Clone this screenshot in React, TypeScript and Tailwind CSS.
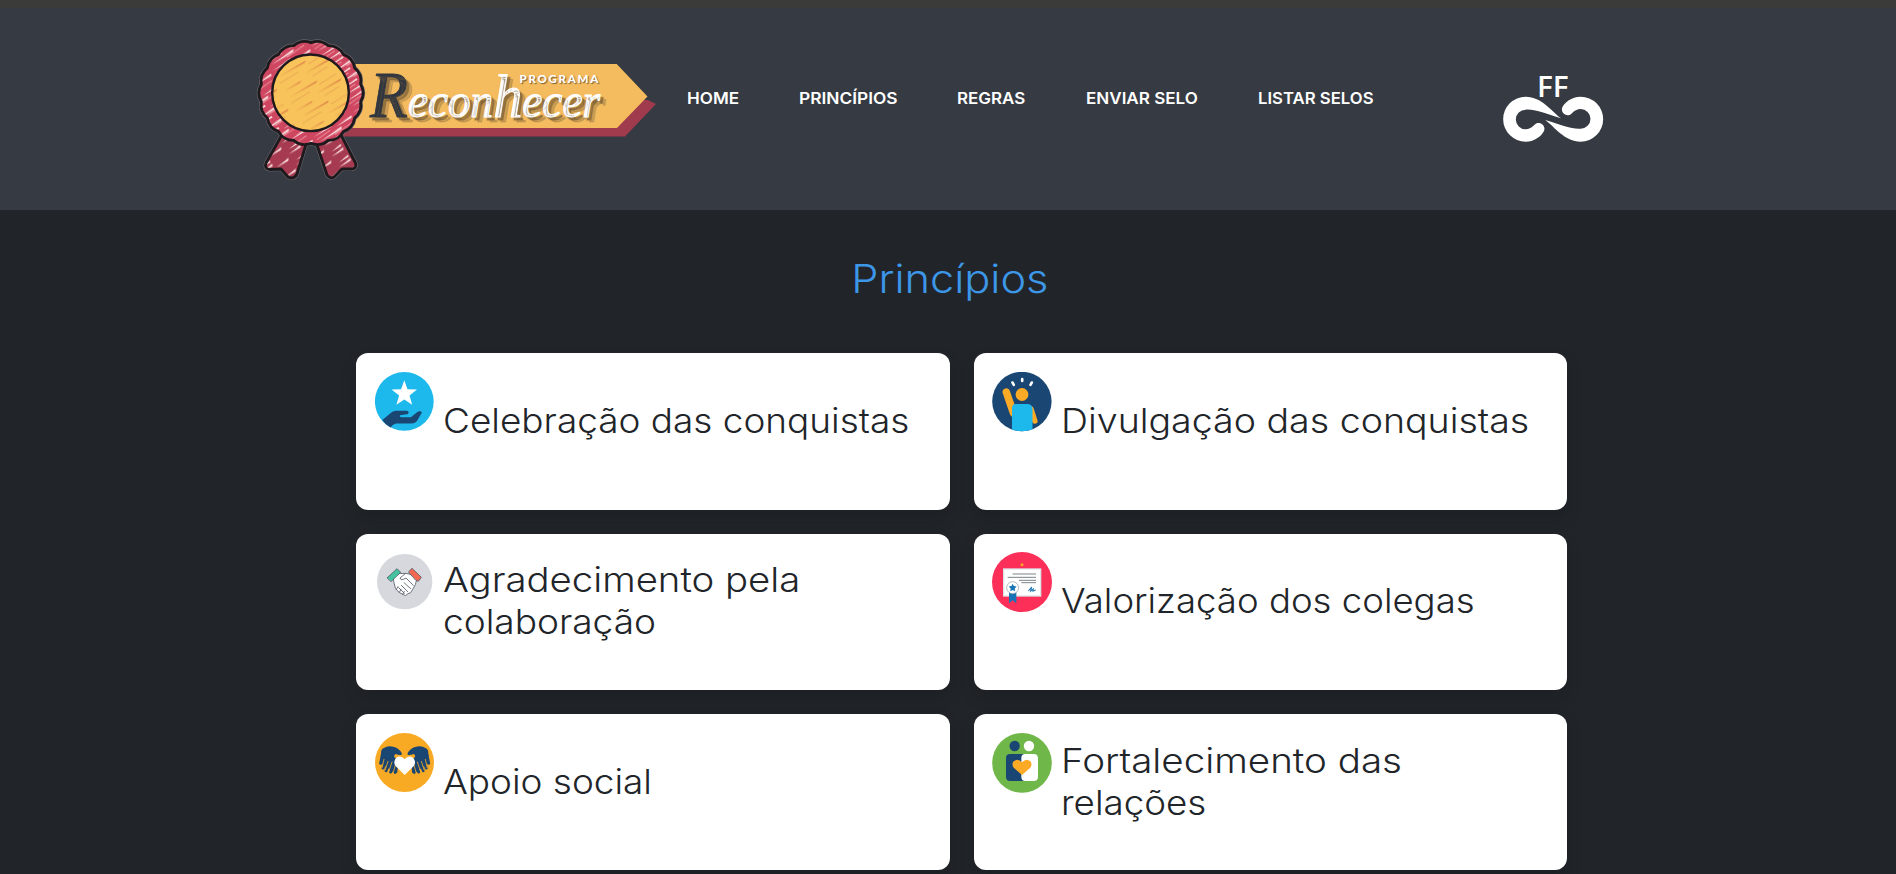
import type { ReactNode } from "react";

const scallops = Array.from({ length: 18 }, (_, i) => {
  const at = (k: number, r: number) => {
    const a = (k * Math.PI) / 18;
    return `${(61 + r * Math.cos(a)).toFixed(1)} ${(57 + r * Math.sin(a)).toFixed(1)}`;
  };
  return `${i === 0 ? `M${at(-1, 50.4)}` : ""} Q${at(2 * i, 54.8)} ${at(2 * i + 1, 50.4)}`;
}).join("") + "Z";

const leftRibbon = "M33 97 L16 127 Q14 133 20 133.500 L31 133 L38 141 Q44 144 47 138 L57 105Z";
const rightRibbon = "M66 106 L77 139 Q81 144 85 140 L92 133 L102 133 Q107 132 105.500 127 L90 97Z";

function ProgramLogo() {
  return (
    <svg viewBox="0 0 412 150" className="h-[150px] w-[412px] shrink-0" role="img">
      <defs>
        <pattern id="roseHatch" width="46" height="13" patternUnits="userSpaceOnUse" patternTransform="rotate(-32)">
          <rect width="46" height="13" fill="#cf4660" />
          <path d="M0 3 L22 1.200 L22 3Z M25 5.500 L44 4 L43 6.200Z M3 10 L30 8 L28 10.400Z" fill="#fbe3e2" />
          <path d="M20 11.500 L41 10.500 M2 6.300 L18 5.500" stroke="#ee8d98" strokeWidth="1" />
        </pattern>
        <pattern id="wineHatch" width="34" height="13" patternUnits="userSpaceOnUse" patternTransform="rotate(-34)">
          <rect width="34" height="13" fill="#a63a50" />
          <path d="M0 3 L15 1.200 L14 3.400Z M16 7 L32 5.400 L30 7.800Z M3 11.500 L15 10.200 L14 12.200Z" fill="#fbe3e2" />
        </pattern>
        <pattern id="goldHatch" width="61" height="23" patternUnits="userSpaceOnUse" patternTransform="rotate(-30)">
          <rect width="61" height="23" fill="#f8c35a" />
          <path d="M4 4 L36 3 L34 4.600Z M28 14 L58 13.200 L56 14.700Z M2 19 L22 18.300 L20 19.600Z" fill="#dc8048" />
          <path d="M2 10 L24 9.300 M36 7.500 L56 6.800 M34 20 L52 19.300" stroke="#ecaa54" strokeWidth="1" />
        </pattern>
      </defs>
      <path d="M90 64 H398 L406 68 L375 100.500 H90Z" fill="#a03b4e" />
      <path d="M90 28 H366.700 L397.500 60.500 L367 92 H90Z" fill="#f4bc5e" />
      <g stroke="#66666b" strokeWidth="4" strokeLinejoin="round">
        <path d={leftRibbon} />
        <path d={rightRibbon} />
        <path d={scallops} />
      </g>
      <g stroke="#1e191d" strokeWidth="2.800" strokeLinejoin="round">
        <path d={leftRibbon} fill="url(#wineHatch)" />
        <path d={rightRibbon} fill="url(#wineHatch)" />
        <path d={scallops} fill="url(#roseHatch)" />
        <circle cx="60.500" cy="56.800" r="38.300" fill="url(#goldHatch)" strokeWidth="2.400" />
      </g>
      <text
        x="120"
        y="81"
        fontFamily="Liberation Serif, serif"
        fontStyle="italic"
        fontSize="48"
        textLength="230"
        lengthAdjust="spacingAndGlyphs"
        className="[text-shadow:3px_3px_1px_rgba(110,85,50,0.6),6px_5px_0_rgba(140,110,65,0.35)]"
      >
        <tspan fontSize="66" fill="#303641" stroke="#303641" strokeWidth=".8">R</tspan>
        <tspan fill="#fff" stroke="#fff" strokeWidth="1.100">econ</tspan>
        <tspan fontSize="62" fill="#fff" stroke="#fff" strokeWidth="1.100">h</tspan>
        <tspan fill="#fff" stroke="#fff" strokeWidth="1.100">ecer</tspan>
      </text>
      <text
        x="269.500"
        y="46.500"
        fontFamily="Lato, sans-serif"
        fontWeight="900"
        fontSize="11.500"
        fill="#fff"
        letterSpacing="1.300"
        textLength="80"
        className="[text-shadow:1px_1px_1px_rgba(90,70,40,0.8)]"
      >
        PROGRAMA
      </text>
    </svg>
  );
}

const loop =
  "M243 176 C215 155 185 111 137 111 A67.5 67.5 0 0 0 137 246 C165 246 185 228 192 214 C198 200 183 186 170 191 C160 195 158 208 137 209 A29.5 29.5 0 0 1 137 150 C165 148 190 160 243 176Z";

function CompanyLogo() {
  return (
    <svg viewBox="60 10 320 250" className="h-[83.33px] w-[106.66px] shrink-0" fill="#fff" role="img">
      <text x="171" y="111" fontFamily="Open Sans, sans-serif" fontWeight="600" fontSize="84" textLength="95" lengthAdjust="spacingAndGlyphs">
        FF
      </text>
      <path d={loop} />
      <path d={loop} transform="rotate(180 219.5 178.5)" />
    </svg>
  );
}

function Icon({ viewBox, children }: { viewBox: string; children: ReactNode }) {
  return (
    <svg viewBox={viewBox} className="mt-[18.600px] size-[60px] shrink-0">
      {children}
    </svg>
  );
}

const starIcon = (
  <Icon viewBox="0 0 60 60">
    <circle cx="29.3" cy="29.4" r="29.4" fill="#1eb9ec" />
    <path d="M29.3 8.3 L32.5 17.3 L42 17.5 L34.5 23.4 L37.2 32.8 L29.3 27.4 L21.4 32.8 L24.1 23.4 L16.6 17.5 L26.1 17.3Z" fill="#fff" />
    <path d="M7.3 48 L17 40 Q19 38.7 22 38.7 H32 Q34 39 33.6 41 Q33 42.6 30 42.6 L25 43.3 Q24 44.6 26 45.2 H36 L42 40.3 Q45 38.4 47 40.3 L42 49 Q40.5 51.4 37 51.4 H21 Q18 52 15.5 55.5 Q10 52.500 7.300 48Z" fill="#1a4673" />
  </Icon>
);

const raisedArmIcon = (
  <Icon viewBox="0 0 60 60">
    <clipPath id="badge"><circle cx="29.900" cy="29.500" r="29.700" /></clipPath>
    <g clipPath="url(#badge)">
      <rect width="60" height="60" fill="#1a4673" />
      <g strokeLinecap="round" fill="none">
        <path d="M20.500 10.500 L21.800 12.800 M30.200 7 V9 M39.800 10.500 L38.500 12.800" stroke="#fff" strokeWidth="2.600" />
        <path d="M14.300 20 L21.500 41" stroke="#fbaa26" strokeWidth="7.500" />
        <path d="M39 37 L42.800 49" stroke="#fbaa26" strokeWidth="5.500" />
      </g>
      <circle cx="30" cy="22.500" r="6.400" fill="#fbaa26" />
      <path d="M20 60 V36 Q20 32 24 32 H36 Q40.500 32 40.500 38 V60Z" fill="#1eb9ec" />
    </g>
  </Icon>
);

const handshakeIcon = (
  <Icon viewBox="30 36 180 180">
    <circle cx="119" cy="125" r="83" fill="#d6d8dd" />
    <g stroke="#535b69" strokeWidth="2.500" strokeLinejoin="round" strokeLinecap="round">
      <path d="M85 108 L98 101 L121 100 L142 104 L155 119 L151 134 L143 148 L137 158 L129 161 L121 167 L114 163 L104 158 L96 151 L91 144 L87 128Z" fill="#fff" />
      <path d="M121 101 L105 114 Q107 122 115 118 L123 114 L145 136 M117 128 L137 146 M109 136 L128 155 M101 143 L118 160 M94 148 L99 140 M103 157 L108 148 M113 163 L118 154" fill="none" />
      <path d="M67 113 L96 86 L107 97 L79 124Z" fill="#43c3a0" />
      <path d="M131 95 L141 85 L169 112 L160 124 L153 121Z" fill="#f26652" />
    </g>
  </Icon>
);

const diplomaIcon = (
  <Icon viewBox="36 36 180 180">
    <circle cx="126" cy="126" r="90" fill="#fc2f58" />
    <circle cx="126" cy="74" r="4.500" fill="#f9a62b" />
    <rect x="71" y="87" width="111" height="81" fill="#fff" stroke="#dce5e8" strokeWidth="4" />
    <path d="M98 102 H168 M83 112 H168 M117 121 H168 M124 128 H168" stroke="#606a70" strokeWidth="2.500" />
    <path d="M87 153 H109 V190 L98 181 L87 190Z" fill="#1674b7" />
    <circle cx="98" cy="143" r="18" fill="#fff" stroke="#8b9aa2" strokeWidth="2" />
    <path d="M98 131 L101.500 138 L110 139.500 L104 145.500 L105.500 154 L98 150 L90.500 154 L92 145.500 L86 139.500 L94.500 138Z" fill="#1674b7" />
    <path d="M145 153 L155 141 L152 153 L160 147 L159 153 L167 150" fill="none" stroke="#2c7db4" strokeWidth="3.500" />
  </Icon>
);

const glove = (
  <>
    <path d="M49 91 Q57 80 76 79 Q94 80 106 93 Q113 101 109 105 Q101 106 92 102 Q86 105 88 111 L98 120 L97 157 L91 161 L49 128 Q46 110 49 91Z" fill="#1a4673" />
    <path d="M52 105 L47 130 M63 119 L54 144 M75 122 L63 152 M87 127 L77 156 M96 133 L90 157" stroke="#1a4673" strokeWidth="9" strokeLinecap="round" />
    <path d="M57 118 L51 144 M69 124 L60 151 M81 126 L70 158 M92 132 L84 160" stroke="#f9aa24" strokeWidth="2.500" strokeLinecap="round" />
  </>
);

const glovesIcon = (
  <Icon viewBox="30 39 180 180">
    <circle cx="118.500" cy="127.500" r="88.500" fill="#f9aa24" />
    {glove}
    <g transform="translate(238 0) scale(-1 1)">{glove}</g>
    <path d="M119 165 L91 137 Q84 125 93 114 Q107 104 119 118 Q131 104 145 114 Q154 125 147 137Z" fill="#fff" />
  </Icon>
);

const togetherIcon = (
  <Icon viewBox="36 39 180 180">
    <circle cx="126" cy="128.500" r="89.500" fill="#70b749" />
    <circle cx="104" cy="78" r="15.500" fill="#1a4673" />
    <circle cx="147" cy="78" r="15.500" fill="#fff" />
    <rect x="78" y="102" width="62" height="81" rx="12" fill="#1a4673" />
    <path d="M135 102 H161 Q174 102 174 115 V170 Q174 183 161 183 H136 Q124 183 124 170 V114 Q124 102 135 102Z" fill="#fff" />
    <path d="M126 165 L101 143 Q94 132 101 124 Q114 113 126 127 Q139 113 151 124 Q158 133 151 143Z" fill="#fbaa26" />
  </Icon>
);

const principles = [
  { icon: starIcon, lines: [{ text: "Celebração das conquistas", scale: "scale-x-[1.071]" }] },
  { icon: raisedArmIcon, lines: [{ text: "Divulgação das conquistas", scale: "scale-x-[1.088]" }] },
  {
    icon: handshakeIcon,
    lines: [
      { text: "Agradecimento pela", scale: "scale-x-[1.111]" },
      { text: "colaboração", scale: "scale-x-[1.074]" },
    ],
  },
  { icon: diplomaIcon, lines: [{ text: "Valorização dos colegas", scale: "scale-x-[1.06]" }] },
  { icon: glovesIcon, lines: [{ text: "Apoio social", scale: "scale-x-[1.07]" }] },
  {
    icon: togetherIcon,
    lines: [
      { text: "Fortalecimento das", scale: "scale-x-[1.117]" },
      { text: "relações", scale: "scale-x-[1.065]" },
    ],
  },
];

const links = [
  { label: "HOME", width: "w-[112px]", scale: "scale-x-[1.07]" },
  { label: "PRINCÍPIOS", width: "w-[158px]", scale: "scale-x-[1.083]" },
  { label: "REGRAS", width: "w-[129px]", scale: "scale-x-[1.06]" },
  { label: "ENVIAR SELO", width: "w-[171.500px]", scale: "scale-x-[1.065]" },
  { label: "LISTAR SELOS", width: "w-[120px]", scale: "scale-x-[1.045]" },
];

export default function App() {
  return (
    <div className="h-[874px] overflow-hidden bg-[#212529] font-['Inter',sans-serif]">
      <div className="h-2 bg-[#3b3b3a]" />
      <header className="flex h-[202px] items-start bg-[#363a42] pl-[250px]">
        <div className="mt-[28px]">
          <ProgramLogo />
        </div>
        <nav className="mt-[78px] ml-[25px] flex">
          {links.map((l) => (
            <a key={l.label} href="#" className={`${l.width} shrink-0 text-[16px] leading-6 font-semibold whitespace-nowrap text-white`}>
              <span className={`inline-block origin-left ${l.scale}`}>{l.label}</span>
            </a>
          ))}
        </nav>
        <div className="mt-[55.300px] ml-[122px]">
          <CompanyLogo />
        </div>
      </header>
      <main className="ml-[356px] w-[1211px]">
        <h1 className="flex justify-center pt-[45px] pr-[23px] text-[39px] leading-[48px] font-[350] text-[#3d97e8]">
          <span className="scale-x-[1.11]">Princípios</span>
        </h1>
        <div className="mt-[50px] grid grid-cols-2 grid-rows-[156.5px_156.5px_156px] gap-6">
          {principles.map((p) => (
            <section key={p.lines[0].text} className="flex items-start rounded-xl bg-white pl-[18.500px] shadow-[0_8px_16px_rgba(0,0,0,0.15)]">
              {p.icon}
              <h2 className="mt-[17.800px] ml-[8.500px] flex h-[100px] flex-col items-start justify-center text-[34.500px] leading-[42px] font-light whitespace-nowrap text-[#212529]">
                {p.lines.map((line) => (
                  <span key={line.text} className={`origin-left ${line.scale}`}>
                    {line.text}
                  </span>
                ))}
              </h2>
            </section>
          ))}
        </div>
      </main>
    </div>
  );
}
